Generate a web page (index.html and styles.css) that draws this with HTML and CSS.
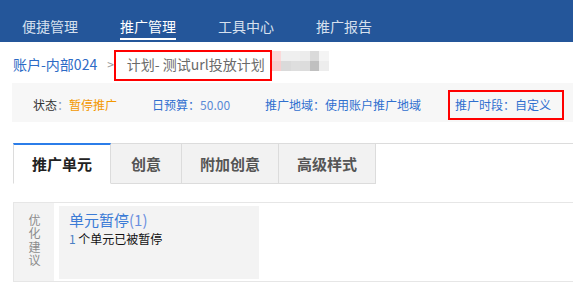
FILE: index.html
```html
<!DOCTYPE html>
<html lang="zh-CN">
<head>
  <meta charset="UTF-8" />
  <title>推广管理 - 计划详情</title>
  <link rel="stylesheet" href="styles.css">
</head>
<body>

  <div class="topnav">
    <a class="nav-item">便捷管理</a>
    <a class="nav-item active">推广管理</a>
    <a class="nav-item">工具中心</a>
    <a class="nav-item">推广报告</a>
  </div>

  <div class="crumbs">
    <a class="crumb-link">账户-内部024</a>
    <span class="crumb-sep">&gt;</span>
    <span class="crumb-current mark">计划- 测试url投放计划</span>
    <!-- mosaic over the hidden part of the name -->
    <span class="mosaic">
      <i class="m1"></i><i class="m2"></i><i class="m3"></i><i class="m4"></i><i class="m5"></i><i class="m6"></i>
      <i class="m7"></i><i class="m8"></i><i class="m9"></i><i class="m10"></i><i class="m11"></i><i class="m12"></i>
    </span>
  </div>

  <div class="infobar">
    <span class="info"><b class="info-label">状态</b><b class="info-colon">：</b><b class="info-warn">暂停推广</b></span>
    <span class="info info-blue">日预算：<b class="info-num">50.00</b></span>
    <span class="info info-blue">推广地域：使用账户推广地域</span>
    <span class="info info-blue mark mark-small">推广时段：自定义</span>
  </div>

  <div class="tabs">
    <a class="tab active">推广单元</a>
    <a class="tab tab-short">创意</a>
    <a class="tab">附加创意</a>
    <a class="tab">高级样式</a>
  </div>

  <div class="advice">
    <div class="advice-label"><span class="advice-label-text">优化建议</span></div>
    <div class="advice-card">
      <a class="advice-title">单元暂停<span class="advice-count">(1)</span></a>
      <p class="advice-text"><span class="advice-num">1</span> 个单元已被暂停</p>
    </div>
  </div>

</body>
</html>
```

FILE: styles.css
```css
* {
  box-sizing: border-box;
}

body {
  margin: 0;
  padding: 0;
  background: #fff;
  font-family: "Noto Sans CJK SC", "Noto Sans", sans-serif;
  color: #333;
  width: 573px;
  overflow: hidden;
}

a {
  text-decoration: none;
}

b {
  font-weight: normal;
}

/* top navigation */
.topnav {
  display: flex;
  gap: 42px;
  height: 42px;
  padding-left: 22px;
  background-color: #24569a;
}

.nav-item {
  font-size: 14px;
  line-height: 20px;
  padding: 16px 0 2px;
  height: 40px;
  color: #d6e0ee;
  border-bottom: 2px solid transparent;
}

.nav-item.active {
  color: #fff;
  border-bottom-color: #fff;
}

/* breadcrumb */
.crumbs {
  display: flex;
  align-items: center;
  height: 41px;
  padding: 8px 0 2px 13px;
}

.crumb-link {
  font-size: 14px;
  line-height: 24px;
  padding-bottom: 3px;
  color: #2d6bc6;
}

.crumb-sep {
  font-size: 12px;
  line-height: 24px;
  padding-bottom: 3px;
  color: #999;
  margin: 0 0 0 10px;
}

.mark {
  border: 2px solid #f00;
}

.crumb-current {
  font-size: 14px;
  line-height: 24px;
  padding: 0 5px 3px 11px;
  color: #6a6a6a;
}

.mosaic {
  align-self: flex-start;
  display: grid;
  grid-template-columns: repeat(6, 9.5px);
  grid-template-rows: 10px 10px;
  margin-top: 1px;
}

.mosaic i { display: block; }
.m1 { background: #fbd9d9; }
.m2 { background: #efefef; }
.m3 { background: #efefef; }
.m4 { background: #ececec; }
.m5 { background: #dadada; }
.m6 { background: #f4f4f4; }
.m7 { background: #f6cfcf; }
.m8 { background: #dadada; }
.m9 { background: #dedede; }
.m10 { background: #dcdcdc; }
.m11 { background: #c0c0c0; }
.m12 { background: #ededed; }

/* status bar */
.infobar {
  display: flex;
  align-items: center;
  gap: 35px;
  height: 39px;
  margin-left: 12px;
  padding: 4px 0 0 21px;
  background-color: #f7f7f7;
  font-size: 12px;
  line-height: 18px;
}

.info-label {
  color: #333;
}

.info-colon {
  color: #7f95b8;
}

.info-warn {
  color: #f39800;
}

.info-blue {
  color: #2f6fcf;
}

.info-num {
  color: #5a8ad6;
}

.mark-small {
  line-height: 26px;
  padding: 0 11px 0 5px;
  margin-left: -8px;
}

/* tabs */
.tabs {
  display: flex;
  margin: 21px 0 0 13px;
  border-top: 1px solid #dcdcdc;
  height: 41px;
}

.tab {
  font-size: 15px;
  font-weight: bold;
  line-height: 38px;
  padding: 1px 18px 0;
  margin-top: -1px;
  color: #555;
  background-color: #f2f2f2;
  border-top: 1px solid #dcdcdc;
  border-right: 1px solid #dcdcdc;
  border-bottom: 1px solid #dcdcdc;
}

.tab-short {
  padding: 1px 20px 0;
}

.tab.active {
  color: #222;
  background-color: #fff;
  border-top: 2px solid #2b7de9;
  border-left: 1px solid #dcdcdc;
  border-bottom-color: #fff;
  padding-top: 0;
}

/* optimisation advice */
.advice {
  display: flex;
  margin: 18px 0 0 13px;
  height: 80px;
  border: 1px solid #e6e6e6;
  border-right: none;
}

.advice-label {
  width: 40px;
  padding-top: 11px;
  background-color: #f3f3f3;
  text-align: center;
}

.advice-label-text {
  writing-mode: vertical-rl;
  letter-spacing: 1.5px;
  color: #8c8c8c;
  font-size: 12px;
  line-height: 14px;
}

.advice-card {
  width: 200px;
  margin: 3px 0 2px 5px;
  padding: 4px 10px;
  background-color: #f3f3f3;
}

.advice-title {
  display: block;
  font-size: 15px;
  line-height: 20px;
  color: #3b7bd6;
}

.advice-count {
  color: #6b8fe0;
}

.advice-text {
  margin: 0;
  font-size: 12px;
  line-height: 18px;
  color: #111;
}

.advice-num {
  color: #4a7fc4;
}
```
